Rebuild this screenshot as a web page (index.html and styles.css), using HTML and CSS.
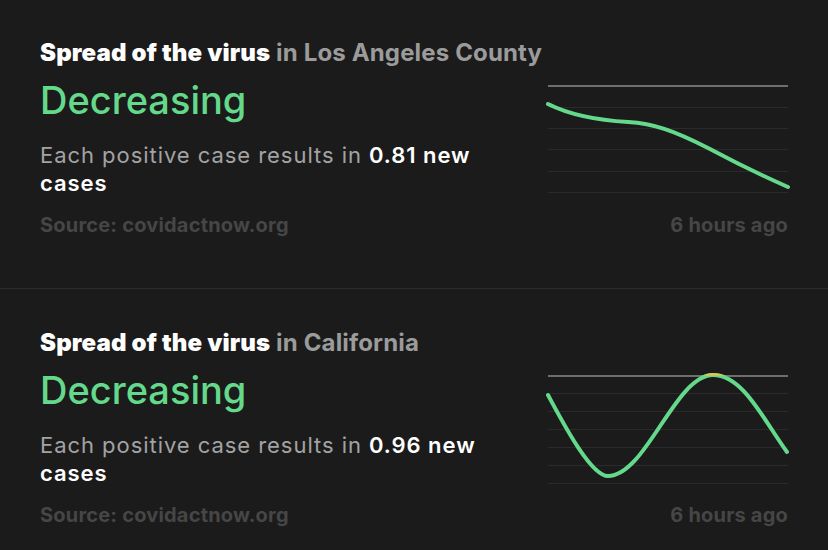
FILE: index.html
```html
<!DOCTYPE html>
<html>
<head>
<meta charset="utf-8">
<link rel="stylesheet" href="styles.css">
</head>
<body>
<section class="card first">
  <h2 class="title"><b>Spread of the virus</b> <span>in Los Angeles County</span></h2>
  <div class="main">
    <div class="left">
      <div class="status">Decreasing</div>
      <p class="desc">Each positive case results in <b>0.81 new</b> <b>cases</b></p>
    </div>
    <svg class="chart" width="240" height="110" viewBox="0 0 240 110">
      <g class="grid">
        <line x1="0" y1="23.5" x2="240" y2="23.5"/>
        <line x1="0" y1="44.5" x2="240" y2="44.5"/>
        <line x1="0" y1="65.5" x2="240" y2="65.5"/>
        <line x1="0" y1="87.5" x2="240" y2="87.5"/>
        <line x1="0" y1="108.5" x2="240" y2="108.5"/>
      </g>
      <line class="top" x1="0" y1="2" x2="240" y2="2"/>
      <path class="curve" d="M0,20 C20,30 45,36 80,38 C105,39.5 125,46 160,64 C190,80 215,92 240,103"/>
    </svg>
  </div>
  <div class="foot"><span>Source: covidactnow.org</span><span>6 hours ago</span></div>
</section>
<section class="card">
  <h2 class="title"><b>Spread of the virus</b> <span>in California</span></h2>
  <div class="main">
    <div class="left">
      <div class="status">Decreasing</div>
      <p class="desc">Each positive case results in <b>0.96 new</b> <b>cases</b></p>
    </div>
    <svg class="chart" width="240" height="110" viewBox="0 0 240 110">
      <defs>
        <clipPath id="peak"><rect x="0" y="-6" width="240" height="7.5"/></clipPath>
      </defs>
      <g class="grid">
        <line x1="0" y1="19.5" x2="240" y2="19.5"/>
        <line x1="0" y1="37.5" x2="240" y2="37.5"/>
        <line x1="0" y1="55.5" x2="240" y2="55.5"/>
        <line x1="0" y1="73.5" x2="240" y2="73.5"/>
        <line x1="0" y1="91.5" x2="240" y2="91.5"/>
        <line x1="0" y1="109.5" x2="240" y2="109.5"/>
      </g>
      <line class="top" x1="0" y1="2" x2="240" y2="2"/>
      <path class="curve" d="M0,21 C12,43 42,102 60,102 C98,102 127,1 165,1 C195,1 215,45 239,78"/>
      <path class="curve warn" clip-path="url(#peak)" d="M0,21 C12,43 42,102 60,102 C98,102 127,1 165,1 C195,1 215,45 239,78"/>
    </svg>
  </div>
  <div class="foot"><span>Source: covidactnow.org</span><span>6 hours ago</span></div>
</section>
</body>
</html>
```
FILE: styles.css
```css
html, body {
  margin: 0;
  padding: 0;
  background: #1b1b1b;
  width: 828px;
  height: 550px;
  overflow: hidden;
}
body {
  font-family: Inter, "Liberation Sans", sans-serif;
  color: #fff;
}
.card {
  box-sizing: border-box;
  height: 290px;
  padding: 40px 40px 0 40px;
  border-bottom: 1px solid #2c2c2c;
}
.card.first {
  margin-top: -1px;
}
.title {
  margin: 0;
  font-size: 24px;
  line-height: 28px;
  font-weight: 700;
  letter-spacing: 0.15px;
  color: #fff;
  white-space: nowrap;
}
.title span {
  color: #9b9b9b;
}
.main {
  display: flex;
  gap: 40px;
  margin-top: 17px;
}
.left {
  flex: 1;
}
.status {
  font-size: 38px;
  line-height: 32px;
  font-weight: 500;
  color: #64d98b;
}
.desc {
  margin: 25px 0 0;
  font-size: 22px;
  line-height: 28px;
  letter-spacing: 0.95px;
  color: #a3a3a3;
}
.desc b {
  color: #fff;
  font-weight: 600;
}
.chart {
  flex: none;
  overflow: visible;
}
.grid line {
  stroke: #2a2a2a;
  stroke-width: 1;
}
.top {
  stroke: #6e6e6e;
  stroke-width: 2;
}
.curve {
  fill: none;
  stroke: #64d98b;
  stroke-width: 4;
  stroke-linecap: round;
}
.curve.warn {
  stroke: #e9c44e;
}
.foot {
  display: flex;
  justify-content: space-between;
  margin-top: 16px;
  font-size: 20px;
  line-height: 24px;
  letter-spacing: 0.2px;
  font-weight: 700;
  color: #464646;
}
```
